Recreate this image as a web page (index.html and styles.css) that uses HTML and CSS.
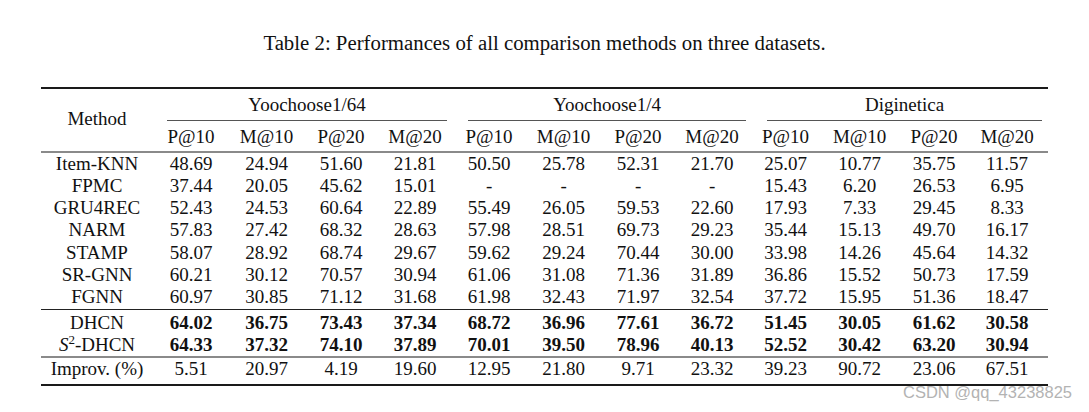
FILE: index.html
```html
<!DOCTYPE html>
<html>
<head>
<meta charset="utf-8">
<link rel="stylesheet" href="styles.css">
</head>
<body>
<div class="page">
  <p class="caption">Table 2: Performances of all comparison methods on three datasets.</p>
  <table class="results">
    <colgroup>
      <col class="w-method">
      <col class="w76"><col class="w75"><col class="w74"><col class="w74">
      <col class="w74"><col class="w75"><col class="w74"><col class="w74">
      <col class="w73"><col class="w75"><col class="w74"><col class="w77">
    </colgroup>
    <thead>
      <tr class="groups">
        <th rowspan="2" class="method-head">Method</th>
        <th colspan="4"><div class="cmid g1">Yoochoose1/64</div></th>
        <th colspan="4"><div class="cmid g2">Yoochoose1/4</div></th>
        <th colspan="4"><div class="cmid g3">Diginetica</div></th>
      </tr>
      <tr class="metrics">
        <th>P@10</th><th>M@10</th><th>P@20</th><th>M@20</th>
        <th>P@10</th><th>M@10</th><th>P@20</th><th>M@20</th>
        <th>P@10</th><th>M@10</th><th>P@20</th><th class="last">M@20</th>
      </tr>
    </thead>
    <tbody class="baselines">
      <tr class="first"><td>Item-KNN</td><td>48.69</td><td>24.94</td><td>51.60</td><td>21.81</td><td>50.50</td><td>25.78</td><td>52.31</td><td>21.70</td><td>25.07</td><td>10.77</td><td>35.75</td><td class="last">11.57</td></tr>
      <tr><td>FPMC</td><td>37.44</td><td>20.05</td><td>45.62</td><td>15.01</td><td>-</td><td>-</td><td>-</td><td>-</td><td>15.43</td><td>6.20</td><td>26.53</td><td class="last">6.95</td></tr>
      <tr><td>GRU4REC</td><td>52.43</td><td>24.53</td><td>60.64</td><td>22.89</td><td>55.49</td><td>26.05</td><td>59.53</td><td>22.60</td><td>17.93</td><td>7.33</td><td>29.45</td><td class="last">8.33</td></tr>
      <tr><td>NARM</td><td>57.83</td><td>27.42</td><td>68.32</td><td>28.63</td><td>57.98</td><td>28.51</td><td>69.73</td><td>29.23</td><td>35.44</td><td>15.13</td><td>49.70</td><td class="last">16.17</td></tr>
      <tr><td>STAMP</td><td>58.07</td><td>28.92</td><td>68.74</td><td>29.67</td><td>59.62</td><td>29.24</td><td>70.44</td><td>30.00</td><td>33.98</td><td>14.26</td><td>45.64</td><td class="last">14.32</td></tr>
      <tr><td>SR-GNN</td><td>60.21</td><td>30.12</td><td>70.57</td><td>30.94</td><td>61.06</td><td>31.08</td><td>71.36</td><td>31.89</td><td>36.86</td><td>15.52</td><td>50.73</td><td class="last">17.59</td></tr>
      <tr class="end"><td>FGNN</td><td>60.97</td><td>30.85</td><td>71.12</td><td>31.68</td><td>61.98</td><td>32.43</td><td>71.97</td><td>32.54</td><td>37.72</td><td>15.95</td><td>51.36</td><td class="last">18.47</td></tr>
    </tbody>
    <tbody class="ours">
      <tr class="first"><td>DHCN</td><td class="b">64.02</td><td class="b">36.75</td><td class="b">73.43</td><td class="b">37.34</td><td class="b">68.72</td><td class="b">36.96</td><td class="b">77.61</td><td class="b">36.72</td><td class="b">51.45</td><td class="b">30.05</td><td class="b">61.62</td><td class="b last">30.58</td></tr>
      <tr class="end"><td><i>S</i><sup>2</sup>-DHCN</td><td class="b">64.33</td><td class="b">37.32</td><td class="b">74.10</td><td class="b">37.89</td><td class="b">70.01</td><td class="b">39.50</td><td class="b">78.96</td><td class="b">40.13</td><td class="b">52.52</td><td class="b">30.42</td><td class="b">63.20</td><td class="b last">30.94</td></tr>
    </tbody>
    <tbody class="improv">
      <tr><td>Improv. (%)</td><td>5.51</td><td>20.97</td><td>4.19</td><td>19.60</td><td>12.95</td><td>21.80</td><td>9.71</td><td>23.32</td><td>39.23</td><td>90.72</td><td>23.06</td><td class="last">67.51</td></tr>
    </tbody>
  </table>
  <div class="watermark">CSDN @qq_43238825</div>
</div>
</body>
</html>
```
FILE: styles.css
```css
html, body {
  margin: 0;
  padding: 0;
  background: #ffffff;
}

.page {
  position: relative;
  width: 1089px;
  height: 412px;
  overflow: hidden;
  font-family: "Liberation Serif", "Times New Roman", serif;
  color: #111;
}

.caption {
  margin: 0;
  padding-top: 31px;
  height: 24px;
  line-height: 24px;
  font-size: 20.8px;
  text-align: center;
}

.results {
  margin-top: 32px;
  margin-left: 41px;
  width: 1007px;
  table-layout: fixed;
  border-collapse: collapse;
  border-top: 2px solid #1a1a1a;
  border-bottom: 2px solid #1a1a1a;
  font-size: 19px;
}

.w-method { width: 112px; }
.w73 { width: 73px; }
.w74 { width: 74px; }
.w75 { width: 75px; }
.w76 { width: 76px; }
.w77 { width: 77px; }

.results th,
.results td {
  padding: 0;
  font-weight: normal;
  text-align: center;
  white-space: nowrap;
  line-height: 22.3px;
}

.results .last {
  padding-right: 5px;
}

.groups th {
  padding-top: 5px;
}

.results .method-head {
  vertical-align: middle;
  padding-bottom: 6px;
}

.cmid {
  padding-bottom: 4px;
  border-bottom: 1px solid #555;
}

.g1 { margin-left: 14px; margin-right: 5px; }
.g2 { margin-left: 16px; margin-right: 3px; }
.g3 { margin-left: 18px; margin-right: 6px; }

.metrics {
  border-bottom: 2px solid #8a8a8a;
}

.results .metrics th {
  padding-top: 5px;
  padding-bottom: 2px;
}

.baselines .end {
  border-bottom: 1px solid #222;
}

.results .ours .first td {
  padding-top: 2px;
}

.ours .end {
  border-bottom: 2px solid #8a8a8a;
}

.results .improv td {
  padding-bottom: 3px;
}

.results .b {
  font-weight: bold;
}

sup {
  font-size: 13px;
  line-height: 0;
  vertical-align: 7px;
}

.watermark {
  position: absolute;
  left: 903px;
  top: 382px;
  font-family: "Liberation Sans", Arial, sans-serif;
  font-size: 16.5px;
  line-height: 20px;
  color: #b3b3b3;
  white-space: nowrap;
}
```
